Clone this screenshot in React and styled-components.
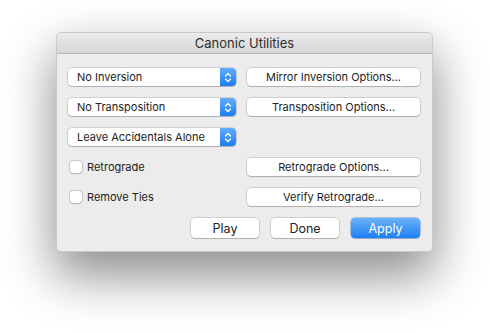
import React from 'react'
import styled, {createGlobalStyle} from 'styled-components'

const GlobalStyle = createGlobalStyle`
    html, body {
        margin: 0;
        background: #ffffff;
    }
    body {
        font-family: Inter, "Noto Sans", "Liberation Sans", sans-serif;
        color: #222222;
        -webkit-font-smoothing: antialiased;
    }
`

const Page = styled.div`
    width: 489px;
    height: 332px;
    padding: 32px 0 0 56px;
    box-sizing: border-box;
    overflow: hidden;
`

const Window = styled.div`
    width: 377px;
    height: 220px;
    box-sizing: border-box;
    background: #ececec;
    border-radius: 5px;
    border: 1px solid rgba(0, 0, 0, 0.14);
    box-shadow: 0 22px 50px 2px rgba(0, 0, 0, 0.45);
    overflow: hidden;
    display: flex;
    flex-direction: column;
`

const TitleBar = styled.div`
    height: 21px;
    box-sizing: border-box;
    flex: none;
    display: flex;
    align-items: center;
    justify-content: center;
    background: linear-gradient(#ebebeb, #d6d6d6);
    border-bottom: 1px solid #b9b9b9;
    font-size: 13px;
    color: #2e2e2e;
`

const Body = styled.div`
    padding: 14px 12px 13px 11px;
    display: flex;
    flex-direction: column;
    gap: 12px;
`

const Grid = styled.div`
    display: grid;
    grid-template-columns: 168px 173px;
    grid-auto-rows: 18px;
    column-gap: 11px;
    row-gap: 12px;
`

const Popup = styled.div`
    display: flex;
    align-items: stretch;
    background: #ffffff;
    border-radius: 4px;
    box-shadow: 0 0 0 0.5px rgba(0, 0, 0, 0.25), 0 1px 1px rgba(0, 0, 0, 0.15);
    overflow: hidden;
    font-size: 11px;
`

const PopupLabel = styled.span`
    flex: 1;
    display: flex;
    align-items: center;
    padding-left: 9px;
    white-space: nowrap;
`

const PopupArrow = styled.span`
    width: 16px;
    flex: none;
    display: flex;
    align-items: center;
    justify-content: center;
    background: linear-gradient(#63aefe, #1b7cf4);
`

const Button = styled.div`
    display: flex;
    align-items: center;
    justify-content: center;
    height: ${p => p.$tall ? '20px' : '18px'};
    width: ${p => p.$w || 'auto'};
    box-sizing: border-box;
    border-radius: 4px;
    background: ${p => p.$primary ? 'linear-gradient(#6cb3fa, #1d7ff5)' : '#ffffff'};
    color: ${p => p.$primary ? '#ffffff' : '#222222'};
    box-shadow: ${p => p.$primary
        ? '0 0 0 0.5px rgba(20, 90, 200, 0.6), 0 1px 1px rgba(0, 0, 0, 0.15)'
        : '0 0 0 0.5px rgba(0, 0, 0, 0.25), 0 1px 1px rgba(0, 0, 0, 0.15)'};
    font-size: ${p => p.$tall ? '12.5px' : '11px'};
    white-space: nowrap;
`

const Check = styled.label`
    display: flex;
    align-items: center;
    gap: 5px;
    padding-left: 2px;
    font-size: 11px;
`

const Box = styled.span`
    width: 12px;
    height: 12px;
    box-sizing: border-box;
    background: #ffffff;
    border-radius: 3px;
    box-shadow: 0 0 0 0.5px rgba(0, 0, 0, 0.3), 0 1px 1px rgba(0, 0, 0, 0.12);
`

const Footer = styled.div`
    display: flex;
    justify-content: flex-end;
    gap: 12px;
`

const Chevrons = () => (
    <svg width="8" height="11" viewBox="0 0 8 11">
        <path d="M1.5 4 L4 1.5 L6.5 4 M1.5 7 L4 9.5 L6.5 7" fill="none" stroke="#ffffff" strokeWidth="1.3" strokeLinecap="round" strokeLinejoin="round" />
    </svg>
)

const Select = ({label}) => (
    <Popup>
        <PopupLabel>{label}</PopupLabel>
        <PopupArrow><Chevrons /></PopupArrow>
    </Popup>
)

const CheckBox = ({label}) => (
    <Check>
        <Box />
        {label}
    </Check>
)

export default function App() {
    return (
        <Page>
            <GlobalStyle />
            <Window>
                <TitleBar>Canonic Utilities</TitleBar>
                <Body>
                    <Grid>
                        <Select label="No Inversion" />
                        <Button>Mirror Inversion Options...</Button>
                        <Select label="No Transposition" />
                        <Button>Transposition Options...</Button>
                        <Select label="Leave Accidentals Alone" />
                        <div />
                        <CheckBox label="Retrograde" />
                        <Button>Retrograde Options...</Button>
                        <CheckBox label="Remove Ties" />
                        <Button>Verify Retrograde...</Button>
                    </Grid>
                    <Footer>
                        <Button $tall $w="68px">Play</Button>
                        <Button $tall $w="68px">Done</Button>
                        <Button $tall $primary $w="69px">Apply</Button>
                    </Footer>
                </Body>
            </Window>
        </Page>
    )
}
